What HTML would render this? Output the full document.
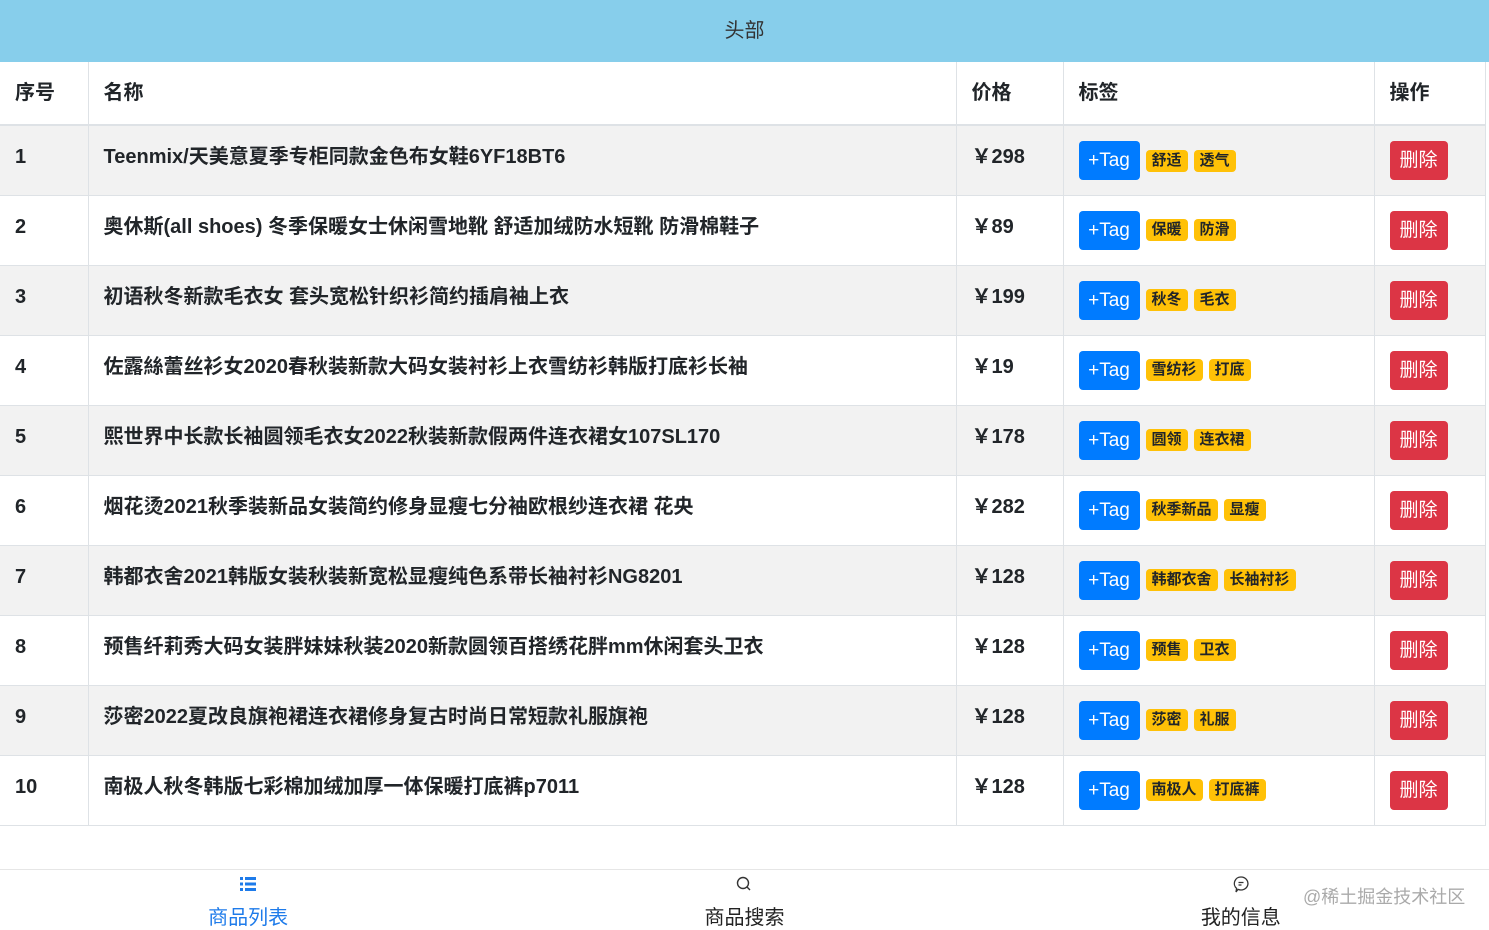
<!DOCTYPE html>
<html><head><meta charset="utf-8"><style>
*{margin:0;padding:0;box-sizing:border-box}
body{width:1489px;height:930px;overflow:hidden;background:#fff;font-family:"Liberation Sans","Noto Sans CJK SC",sans-serif;color:#212529;position:relative}
.hd{height:62px;background:#87ceeb;text-align:center;line-height:62px;font-size:20px;color:#333}
table{border-collapse:collapse;width:1485px;table-layout:fixed}
td,th{border:1px solid #dee2e6;border-top:none;font-size:20px;font-weight:bold;text-align:left;vertical-align:top;padding:0 15px}
th{height:60px;line-height:62px;border-bottom:2px solid #dee2e6}
td{height:70px;padding-top:19px;line-height:24px}
tr:nth-child(even) td{background:#f2f2f2}
td:first-child,th:first-child{border-left:none}
.tb{display:inline-block;background:#007bff;color:#fff;font-weight:normal;font-size:19px;width:61px;height:39px;line-height:39px;text-align:center;border-radius:4px;vertical-align:middle;margin-top:-4px}
.bd{display:inline-block;background:#ffc107;color:#212529;font-size:15px;height:22px;line-height:22px;padding:0 6px;border-radius:4px;margin-left:6px;vertical-align:middle;margin-top:-4px}
.del{display:inline-block;background:#dc3545;color:#fff;font-weight:normal;font-size:19px;width:58px;height:39px;line-height:39px;text-align:center;border-radius:4px;margin-top:-4px}
.ft{position:absolute;top:869px;left:0;width:1489px;height:61px;border-top:1px solid #e6e6e6;display:flex}
.ft div{flex:1;text-align:center;font-size:20px;color:#222;padding-top:4px}
.ft svg{display:block;margin:0 auto 7px}
.wm{position:absolute;left:1303px;top:883px;font-size:18px;color:#aaa}
</style></head><body>
<div class="hd">头部</div>
<table>
<colgroup><col style="width:88px"><col style="width:868px"><col style="width:107px"><col style="width:311px"><col style="width:111px"></colgroup>
<tr><th>序号</th><th>名称</th><th>价格</th><th>标签</th><th>操作</th></tr>
<tr><td>1</td><td>Teenmix/天美意夏季专柜同款金色布女鞋6YF18BT6</td><td>￥298</td><td><span class="tb">+Tag</span><span class="bd">舒适</span><span class="bd">透气</span></td><td><span class="del">删除</span></td></tr>
<tr><td>2</td><td>奥休斯(all shoes) 冬季保暖女士休闲雪地靴 舒适加绒防水短靴 防滑棉鞋子</td><td>￥89</td><td><span class="tb">+Tag</span><span class="bd">保暖</span><span class="bd">防滑</span></td><td><span class="del">删除</span></td></tr>
<tr><td>3</td><td>初语秋冬新款毛衣女 套头宽松针织衫简约插肩袖上衣</td><td>￥199</td><td><span class="tb">+Tag</span><span class="bd">秋冬</span><span class="bd">毛衣</span></td><td><span class="del">删除</span></td></tr>
<tr><td>4</td><td>佐露絲蕾丝衫女2020春秋装新款大码女装衬衫上衣雪纺衫韩版打底衫长袖</td><td>￥19</td><td><span class="tb">+Tag</span><span class="bd">雪纺衫</span><span class="bd">打底</span></td><td><span class="del">删除</span></td></tr>
<tr><td>5</td><td>熙世界中长款长袖圆领毛衣女2022秋装新款假两件连衣裙女107SL170</td><td>￥178</td><td><span class="tb">+Tag</span><span class="bd">圆领</span><span class="bd">连衣裙</span></td><td><span class="del">删除</span></td></tr>
<tr><td>6</td><td>烟花烫2021秋季装新品女装简约修身显瘦七分袖欧根纱连衣裙 花央</td><td>￥282</td><td><span class="tb">+Tag</span><span class="bd">秋季新品</span><span class="bd">显瘦</span></td><td><span class="del">删除</span></td></tr>
<tr><td>7</td><td>韩都衣舍2021韩版女装秋装新宽松显瘦纯色系带长袖衬衫NG8201</td><td>￥128</td><td><span class="tb">+Tag</span><span class="bd">韩都衣舍</span><span class="bd">长袖衬衫</span></td><td><span class="del">删除</span></td></tr>
<tr><td>8</td><td>预售纤莉秀大码女装胖妹妹秋装2020新款圆领百搭绣花胖mm休闲套头卫衣</td><td>￥128</td><td><span class="tb">+Tag</span><span class="bd">预售</span><span class="bd">卫衣</span></td><td><span class="del">删除</span></td></tr>
<tr><td>9</td><td>莎密2022夏改良旗袍裙连衣裙修身复古时尚日常短款礼服旗袍</td><td>￥128</td><td><span class="tb">+Tag</span><span class="bd">莎密</span><span class="bd">礼服</span></td><td><span class="del">删除</span></td></tr>
<tr><td>10</td><td>南极人秋冬韩版七彩棉加绒加厚一体保暖打底裤p7011</td><td>￥128</td><td><span class="tb">+Tag</span><span class="bd">南极人</span><span class="bd">打底裤</span></td><td><span class="del">删除</span></td></tr>
</table>
<div class="ft">
<div style="color:#1e7bea"><svg width="20" height="20" viewBox="0 0 20 20"><g fill="#1e7bea"><rect x="2" y="3" width="3" height="3"/><rect x="7" y="3" width="11" height="3"/><rect x="2" y="8.5" width="3" height="3"/><rect x="7" y="8.5" width="11" height="3"/><rect x="2" y="14" width="3" height="3"/><rect x="7" y="14" width="11" height="3"/></g></svg>商品列表</div>
<div><svg width="20" height="20" viewBox="0 0 20 20"><circle cx="9" cy="9" r="5.5" fill="none" stroke="#333" stroke-width="1.4"/><path d="M13 13l3 3" stroke="#333" stroke-width="1.4"/></svg>商品搜索</div>
<div><svg width="20" height="20" viewBox="0 0 20 20"><path d="M10 3a7 6.5 0 1 1-3 12.4L5 18l.6-3.6A6.5 6.5 0 0 1 10 3z" fill="none" stroke="#333" stroke-width="1.3"/><path d="M7.5 8.5h5M7.5 11h3" stroke="#333" stroke-width="1.2"/></svg>我的信息</div>
</div>
<div class="wm">@稀土掘金技术社区</div>
</body></html>
